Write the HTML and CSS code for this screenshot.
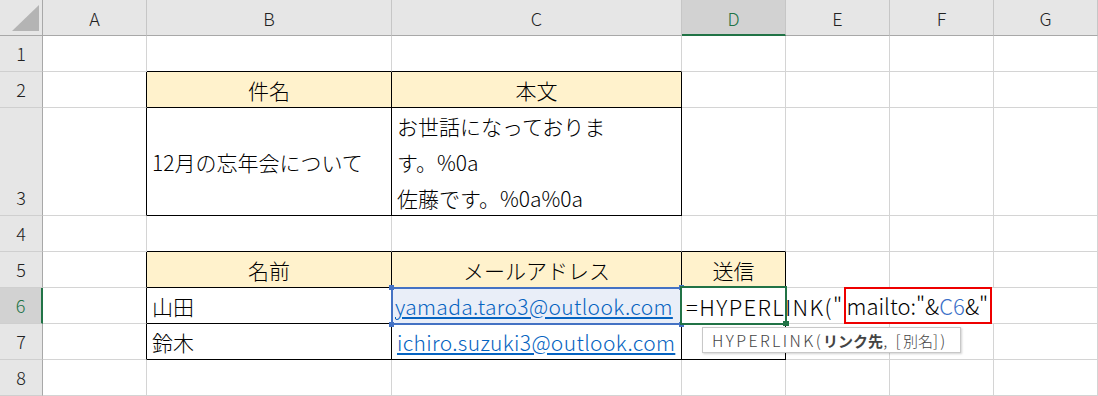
FILE: index.html
```html
<!DOCTYPE html>
<html lang="ja">
<head>
<meta charset="utf-8">
<link rel="stylesheet" href="styles.css">
</head>
<body>
<div class="sheet">
  <!-- header row -->
  <div class="corner"><span class="tri"></span></div>
  <div class="ch">A</div>
  <div class="ch">B</div>
  <div class="ch">C</div>
  <div class="ch sel">D</div>
  <div class="ch">E</div>
  <div class="ch">F</div>
  <div class="ch">G</div>

  <!-- row 1 -->
  <div class="rh">1</div>
  <div class="c"></div>
  <div class="c bb"></div>
  <div class="c bb"></div>
  <div class="c"></div>
  <div class="c"></div>
  <div class="c"></div>
  <div class="c"></div>

  <!-- row 2 -->
  <div class="rh">2</div>
  <div class="c br"></div>
  <div class="c tb head">件名</div>
  <div class="c tb head">本文</div>
  <div class="c"></div>
  <div class="c"></div>
  <div class="c"></div>
  <div class="c"></div>

  <!-- row 3 -->
  <div class="rh">3</div>
  <div class="c br"></div>
  <div class="c tb">12月の忘年会について</div>
  <div class="c tb wrap">お世話になっておりま<br>す。%0a<br>佐藤です。%0a%0a</div>
  <div class="c"></div>
  <div class="c"></div>
  <div class="c"></div>
  <div class="c"></div>

  <!-- row 4 -->
  <div class="rh">4</div>
  <div class="c"></div>
  <div class="c bb"></div>
  <div class="c bb"></div>
  <div class="c bb"></div>
  <div class="c"></div>
  <div class="c"></div>
  <div class="c"></div>

  <!-- row 5 -->
  <div class="rh">5</div>
  <div class="c br"></div>
  <div class="c tb head">名前</div>
  <div class="c tb head">メールアドレス</div>
  <div class="c tb head">送信</div>
  <div class="c"></div>
  <div class="c"></div>
  <div class="c"></div>

  <!-- row 6 -->
  <div class="rh selrow">6</div>
  <div class="c br"></div>
  <div class="c tb">山田</div>
  <div class="c tb ref"><span class="link">yamada.taro3@outlook.com</span></div>
  <div class="c tb active">
    <div class="edit"><span class="fn">=HYPERLINK("</span><span class="mark">mailto:"&amp;<span class="refc">C6</span>&amp;"</span></div>
    <div class="tip"><span class="lat">HYPERLINK(</span><b>リンク先</b><span class="lat">, [</span>別名<span class="lat">])</span></div>
  </div>
  <div class="c"></div>
  <div class="c"></div>
  <div class="c"></div>

  <!-- row 7 -->
  <div class="rh">7</div>
  <div class="c br"></div>
  <div class="c tb">鈴木</div>
  <div class="c tb"><span class="link">ichiro.suzuki3@outlook.com</span></div>
  <div class="c tb"></div>
  <div class="c"></div>
  <div class="c"></div>
  <div class="c"></div>

  <!-- row 8 -->
  <div class="rh">8</div>
  <div class="c"></div>
  <div class="c"></div>
  <div class="c"></div>
  <div class="c"></div>
  <div class="c"></div>
  <div class="c"></div>
  <div class="c"></div>
</div>
</body>
</html>
```
FILE: styles.css
```css
html, body {
  margin: 0;
  padding: 0;
  background: #ffffff;
  overflow: hidden;
}

.sheet {
  display: grid;
  grid-template-columns: 43px 104px 245px 290px 104px 104px 104px 104px;
  grid-template-rows: 36px 36px 36px 108px 36px 36px 36px 36px 36px;
  width: 1098px;
  height: 396px;
  font-family: "Noto Sans CJK JP", "Noto Sans", sans-serif;
  font-weight: 300;
  color: #000;
}

.sheet > div {
  box-sizing: border-box;
  min-width: 0;
}

/* headers */
.corner {
  background: #e6e6e6;
  border-right: 1px solid #a8a8a8;
  border-bottom: 1px solid #a8a8a8;
  position: relative;
}
.tri {
  position: absolute;
  left: 12px;
  top: 5px;
  width: 27px;
  height: 26px;
  background: #b4b4b4;
  clip-path: polygon(100% 0, 100% 100%, 0 100%);
}

.ch {
  background: #e6e6e6;
  border-right: 1px solid #c6c6c6;
  border-bottom: 1px solid #a8a8a8;
  display: flex;
  align-items: center;
  justify-content: center;
  font-size: 18px;
  color: #222;
  padding-top: 1px;
}
.ch.sel {
  background: #d2d2d2;
  color: #217346;
  border-bottom: 2px solid #217346;
}

.rh {
  background: #e6e6e6;
  border-right: 1px solid #a8a8a8;
  border-bottom: 1px solid #cfcfcf;
  display: flex;
  align-items: flex-end;
  justify-content: center;
  font-size: 18px;
  line-height: 35px;
  color: #222;
}
.rh.selrow {
  background: #d2d2d2;
  color: #217346;
  border-right: 2px solid #217346;
}

/* cells */
.c {
  border-right: 1px solid #d4d4d4;
  border-bottom: 1px solid #d4d4d4;
  display: flex;
  align-items: center;
  padding: 0 5px;
  font-size: 21px;
  white-space: nowrap;
}
.c.bb { border-bottom-color: #000; }
.c.br { border-right-color: #000; }
.c.tb {
  border-right-color: #000;
  border-bottom-color: #000;
}
.c.head {
  background: #fff2cc;
  justify-content: center;
}
.c.wrap {
  align-items: flex-start;
  line-height: 36px;
  padding-top: 0;
}

.link {
  color: #0563c1;
  text-decoration: underline;
  text-underline-offset: 2px;
  letter-spacing: 0.35px;
}

/* referenced cell C6 */
.c.ref {
  background: #e9eef8;
  position: relative;
  padding-left: 3px;
}
.c.ref::before {
  content: "";
  position: absolute;
  left: -1px;
  top: -1px;
  width: 292px;
  height: 38px;
  box-sizing: border-box;
  border: 2px solid #4472c4;
}
.c.ref::after {
  content: "";
  position: absolute;
  left: -3px;
  top: -3px;
  width: 5px;
  height: 5px;
  background: #4472c4;
  box-shadow: 290px 0 0 #4472c4, 0 37px 0 #4472c4, 290px 37px 0 #4472c4;
}

/* active editing cell D6 */
.c.active {
  position: relative;
  z-index: 5;
  padding: 0;
}
.edit {
  position: absolute;
  left: 0;
  top: 0;
  width: 316px;
  height: 35px;
  background: #fff;
  display: flex;
  align-items: center;
  padding-left: 4px;
  box-sizing: border-box;
  font-size: 22px;
  white-space: nowrap;
  color: #000;
}
.fn { letter-spacing: 1.4px; }
.mark {
  display: inline-block;
  border: 2px solid #ee0000;
  line-height: 33px;
  padding: 0 2px 0 1px;
  letter-spacing: 0;
}
.refc { color: #3a70c8; }

.c.active::after {
  content: "";
  position: absolute;
  left: -2px;
  top: -2px;
  width: 107px;
  height: 39px;
  box-sizing: border-box;
  border: 2px solid #217346;
  z-index: 2;
}
.c.active::before {
  content: "";
  position: absolute;
  left: 101px;
  top: 33px;
  width: 6px;
  height: 5px;
  background: #217346;
  z-index: 3;
}

.tip {
  position: absolute;
  left: 20px;
  top: 39px;
  height: 26px;
  box-sizing: border-box;
  background: #fff;
  border: 1px solid #c8c8c8;
  box-shadow: 1px 1px 2px rgba(0,0,0,0.18);
  font-size: 15px;
  line-height: 24px;
  color: #444;
  padding: 0 12px 0 9px;
  white-space: nowrap;
  z-index: 4;
}
.tip .lat {
  font-size: 16px;
  letter-spacing: 2.4px;
}
.tip b { font-weight: 700; }
```
